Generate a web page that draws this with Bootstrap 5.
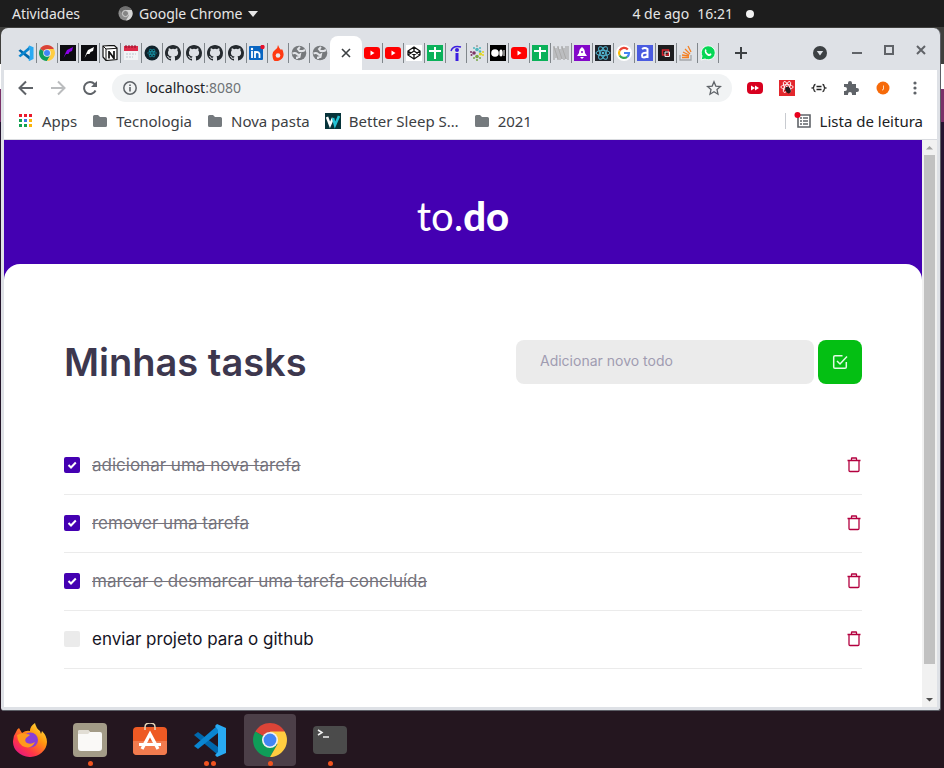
<!DOCTYPE html>
<html lang="pt-BR">
<head>
<meta charset="utf-8">
<meta name="viewport" content="width=device-width, initial-scale=1">
<title>to.do</title>
<link href="https://cdn.jsdelivr.net/npm/bootstrap@5.3.0/dist/css/bootstrap.min.css" rel="stylesheet">
<style>
  body {
    font: 15px/20px "Noto Sans", "Open Sans", sans-serif;
    color: #3c4043;
    background: linear-gradient(#3f3f3d 64px, #fff 64px, #fff 89px, #7a3068 89px, #7a3068 122px, #241430 122px, #241621 700px);
  }
  button { border: 0; padding: 0; background: none; color: inherit; }
  a { color: inherit; text-decoration: none; }
  svg { display: block; flex: none; }

  .desk-bar { height: 27px; background: #1d1d1d; color: #e6e6e6; font-size: 14px; padding: 0 12px; }
  .desk-app { margin-left: 38px; gap: 6px; }
  .desk-clock { margin-left: auto; margin-right: 178px; gap: 8px; }
  .clock-dot { width: 8px; height: 8px; border-radius: 50%; background: #f2f2f2; margin-left: 5px; }

  .win { margin: 1px 3px 0 1px; padding: 0 3px 3px; background: #dee1e6; border-radius: 7px 7px 3px 3px; border-right: 1px solid #5d5f66; border-bottom: 1px solid #5d5f66; }
  .tab-strip { height: 42px; padding-left: 12px; }
  .tab-item { padding: 2px; border-right: 1px solid #80868b; height: 20px; width: 21px; }
  .tab-item.no-rule { border-color: transparent; }
  .tab-open { width: 32px; height: 34px; border-radius: 8px 8px 0 0; background: #fff; align-self: flex-end; margin-left: -1px; }
  .win-tools { gap: 17px; padding-right: 8px; }

  .tool-row { height: 35px; background: #fff; padding: 0 14px; gap: 16px; color: #5f6368; }
  .omni { height: 28px; margin: 0 -1px 0 -2px; border-radius: 14px; background: #f1f3f4; padding: 0 10px; gap: 8px; font-size: 14px; }
  .url-box { color: #202124; outline: 0; }
  .url-box span { color: #6f7377; }
  .ext-row { gap: 16px; }

  .mark-row { height: 35px; background: #fff; border-bottom: 1px solid #d9dbdf; padding: 0 14px 3px; }
  .mark-row a { gap: 8px; margin-right: 15px; }
  .read-list { border-left: 1px solid #c8cbd0; padding-left: 8px; height: 16px; }
  .mark-row .read-list { margin-right: 0; color: #202124; }

  .page { background: #4400b2; }
  .brand-head { height: 124px; padding-top: 53px; color: #fff; font: 400 40px/46px Lato, sans-serif; }
  .brand-head b { font-weight: 900; }
  .sheet { background: #fff; border-radius: 16px 16px 0 0; padding: 76px 60px 30px; font-family: Inter, sans-serif; }
  .sheet h1 { font-size: 38px; line-height: 44px; font-weight: 600; color: #3d374e; margin: 0; }
  .new-task { width: 298px; height: 44px; border: 0; border-radius: 8px; background: #ebebeb; padding: 0 24px 3px; font-size: 14px; color: #3d3d4d; outline: 0; }
  .new-task::placeholder { color: #a09cb1; opacity: 1; }
  .add-btn { width: 44px; height: 44px; border-radius: 8px; background: #04bf13; color: #fff; }
  .task-list { margin-top: 53px; }
  .task-row { height: 58px; padding-bottom: 2px; border-bottom: 1px solid #ebebeb; font-size: 17px; color: #15141f; }
  .task-row label { gap: 12px; }
  .task-row input { appearance: none; width: 16px; height: 16px; margin: 0; border-radius: 2px; background: #ebebeb; }
  .task-row input:checked { background: #4400b2 url("data:image/svg+xml,%3Csvg xmlns='http://www.w3.org/2000/svg' viewBox='0 0 16 16'%3E%3Cpath d='M4.5 8l2.5 2.5 4.8-5' fill='none' stroke='white' stroke-width='2'/%3E%3C/svg%3E"); }
  .task-row input:checked + span { text-decoration: line-through; color: #75737c; }
  .bin { color: #b3003f; }

  .scroller { width: 15px; background: #f1f1f1; }
  .scroller svg { width: 15px; height: 15px; }
  .thumb { width: 11px; flex: 510; background: #c1c1c1; }
  .thumb-rest { flex: 28; }

  .dock { background: #24161f; padding: 2px 4px; margin-top: 1px; gap: 8px; height: 56px; }
  .dock a { width: 52px; height: 52px; border-radius: 4px; }
  .dock a.current { background: #4c3f48; }
  .run-dots { position: absolute; bottom: 0; left: 0; right: 0; gap: 2px; }
  .run-dots i { width: 5px; height: 5px; border-radius: 50%; background: #f0531f; }
</style>
<script src="https://cdn.jsdelivr.net/npm/bootstrap@5.3.0/dist/js/bootstrap.bundle.min.js"></script>
</head>
<body class="d-flex flex-column min-vh-100">

<svg width="0" height="0" class="position-absolute" aria-hidden="true">
  <symbol id="vscode" viewBox="0 0 34 34"><path d="M1 12l4-3 20 15v8z" fill="#0068ad"/><path d="M1 23l4 3 20-16V2z" fill="#0a86d1"/><path d="M24 1l9 4v25l-9 4-2-2 3-3V7l-3-4z" fill="#29aaf2"/></symbol>
  <symbol id="chrome" viewBox="0 0 34 34"><path d="M17 17L2.300 8.500A17 17 0 0 1 31.700 8.500z" fill="#db4437"/><path d="M2.300 8.500A17 17 0 0 0 17 34l7.400-12.800L17 17z" fill="#0f9d58"/><path d="M31.700 8.500A17 17 0 0 1 17 34l7.400-12.800L17 8.500z" fill="#ffcd40"/><circle cx="17" cy="17" r="8" fill="#f1f1f1"/><circle cx="17" cy="17" r="6.400" fill="#4285f4"/></symbol>
  <symbol id="chrome-gray" viewBox="0 0 34 34"><circle cx="17" cy="17" r="16" fill="#8c8c8c"/><path d="M17 9h14a16 16 0 0 1-13 24l7-12z" fill="#d5d5d5"/><path d="M3 9a16 16 0 0 1 28 0H17a8 8 0 0 0-8 7z" fill="#6f6f6f"/><circle cx="17" cy="17" r="7" fill="#858585" stroke="#ddd" stroke-width="2"/></symbol>
  <symbol id="github" viewBox="0 0 16 16"><path fill="#24292e" d="M8 0C3.580 0 0 3.580 0 8c0 3.540 2.290 6.530 5.470 7.590.4.070.55-.17.55-.38 0-.19-.01-.82-.01-1.490-2.010.37-2.530-.49-2.690-.94-.09-.23-.48-.94-.82-1.130-.28-.15-.68-.52-.01-.53.63-.01 1.080.58 1.230.82.72 1.210 1.870.87 2.330.66.07-.52.28-.87.51-1.070-1.780-.2-3.640-.89-3.640-3.950 0-.87.31-1.590.82-2.150-.08-.2-.36-1.020.08-2.120 0 0 .67-.21 2.200.82a7.600 7.600 0 0 1 4 0c1.530-1.040 2.200-.82 2.200-.82.44 1.100.16 1.920.08 2.120.51.56.82 1.270.82 2.150 0 3.070-1.870 3.750-3.650 3.950.29.25.54.73.54 1.480 0 1.070-.01 1.930-.01 2.200 0 .21.15.46.55.38A8 8 0 0 0 16 8c0-4.420-3.580-8-8-8z"/></symbol>
  <symbol id="globe" viewBox="0 0 16 16"><circle cx="8" cy="8" r="7.300" fill="#76797c"/><path d="M1.500 8.500q3-1 4.500.5t3 .5l-.5 2.500-2.500.5v1.500M9 2l-2 2 1.500 2H12l2-1" fill="none" stroke="#e2e4e8" stroke-width="2"/></symbol>
  <symbol id="youtube" viewBox="0 0 16 16"><rect y="2" width="16" height="12" rx="3" fill="red"/><path d="M6.500 5.500v5L10.500 8z" fill="#fff"/></symbol>
  <symbol id="sheets" viewBox="0 0 16 16"><path fill="#0bb15a" d="M0 0h16v16H0z"/><path d="M2 6h12M8 2v12" stroke="#fff" stroke-width="2"/></symbol>
  <symbol id="atom" viewBox="0 0 16 16"><g fill="none" stroke="currentColor" stroke-width="1"><ellipse cx="8" cy="8" rx="7" ry="2.700"/><ellipse cx="8" cy="8" rx="7" ry="2.700" transform="rotate(60 8 8)"/><ellipse cx="8" cy="8" rx="7" ry="2.700" transform="rotate(120 8 8)"/></g><circle cx="8" cy="8" r="1.300" fill="currentColor"/></symbol>
  <symbol id="wing" viewBox="0 0 16 16"><path fill="#0d0d11" d="M0 0h16v16H0z"/><path d="M3.500 13l2-5 1.500-3 6-3-1 4-2.500 1-1 2H6z" fill="currentColor"/></symbol>
  <symbol id="folder" viewBox="0 0 16 16"><path d="M1 3.500Q1 2 2.500 2H6l2 2h5.500Q15 4 15 5.500v7q0 1.500-1.500 1.500h-11Q1 14 1 12.500z" fill="#757a7e"/></symbol>
  <symbol id="bin" viewBox="0 0 16 16"><path d="M1.500 3.500h13M3 4v9.500q0 1 1 1h8q1 0 1-1V4M5.500 3.500v-2q0-.5.500-.5h4q.5 0 .5.500v2" fill="none" stroke="currentColor" stroke-width="1.300"/></symbol>
</svg>

<header class="desk-bar d-flex align-items-center">
  <button type="button">Atividades</button>
  <button type="button" class="desk-app d-flex align-items-center"><svg width="15" height="15"><use href="#chrome-gray"/></svg>Google Chrome<svg width="10" height="6" viewBox="0 0 10 6"><path d="M0 0h10L5 6z" fill="#e6e6e6"/></svg></button>
  <button type="button" class="desk-clock d-flex align-items-center"><span>4 de ago</span><span>16:21</span><span class="clock-dot"></span></button>
</header>

<section class="win d-flex flex-column flex-grow-1">
  <nav class="tab-strip d-flex" aria-label="Abas">
    <div class="d-flex align-items-center pt-2">
      <a href="#" class="tab-item"><svg width="16" height="16"><use href="#vscode"/></svg></a>
      <a href="#" class="tab-item"><svg width="16" height="16"><use href="#chrome"/></svg></a>
      <a href="#" class="tab-item"><svg width="16" height="16" color="#8b00e8"><use href="#wing"/></svg></a>
      <a href="#" class="tab-item"><svg width="16" height="16" color="#fff"><use href="#wing"/></svg></a>
      <a href="#" class="tab-item"><svg width="16" height="16" viewBox="0 0 16 16"><path d="M1 1l11-.7L15 3v11.500L4 15.500 1 12z" fill="#fff" stroke="#111" stroke-width="1.200"/><path d="M1 1l3 3 11-.7M4 4v11" fill="none" stroke="#111"/><path d="M7 13.500V6m5 8V6M7 6.500l5 7" fill="none" stroke="#111" stroke-width="1.700"/></svg></a>
      <a href="#" class="tab-item"><svg width="16" height="16" viewBox="0 0 16 16"><path d="M1 1h14v14H1z" fill="#f2f3f5"/><path d="M1 1h14v5H1z" fill="#dd2a49"/><path d="M3 0v3m3-3v3m3-3v3m3-3v3" stroke="#8e0e2b"/><path d="M3 9h10M3 12h7" stroke="#bcc3cc" stroke-dasharray="2 1"/></svg></a>
      <a href="#" class="tab-item"><svg width="16" height="16" viewBox="0 0 16 16" color="#16a0b5"><circle cx="8" cy="8" r="7.500" fill="#10222b"/><g transform="translate(3 3) scale(.63)"><use href="#atom" width="16" height="16"/></g></svg></a>
      <a href="#" class="tab-item"><svg width="16" height="16"><use href="#github"/></svg></a>
      <a href="#" class="tab-item"><svg width="16" height="16"><use href="#github"/></svg></a>
      <a href="#" class="tab-item"><svg width="16" height="16"><use href="#github"/></svg></a>
      <a href="#" class="tab-item"><svg width="16" height="16"><use href="#github"/></svg></a>
      <a href="#" class="tab-item"><svg width="16" height="16" viewBox="0 0 16 16"><rect y="1" width="14" height="14" rx="1" fill="#0a66c2"/><path d="M3 6v7m3 0V6m0 3q0-2 2-2t2.500 2v4" fill="none" stroke="#fff" stroke-width="1.800"/><circle cx="3" cy="4" r="1.200" fill="#fff"/><circle cx="13.500" cy="2" r="2.200" fill="#e8102a"/></svg></a>
      <a href="#" class="tab-item"><svg width="16" height="16" viewBox="0 0 16 16"><path d="M8 0q1 3 3 5l1-1q2 3 1.500 6.500T8 16t-5.500-5.500Q2 7 5 5q3-2 3-5z" fill="#ff3a12"/><circle cx="8" cy="10.500" r="2.300" fill="#e8e9ec"/></svg></a>
      <a href="#" class="tab-item"><svg width="16" height="16"><use href="#globe"/></svg></a>
      <a href="#" class="tab-item no-rule"><svg width="16" height="16"><use href="#globe"/></svg></a>
    </div>
    <button type="button" class="tab-open d-flex align-items-center justify-content-center" aria-label="Fechar aba"><svg width="10" height="10" viewBox="0 0 10 10"><path d="M1 1l8 8M9 1L1 9" stroke="#3c4043" stroke-width="1.600"/></svg></button>
    <div class="d-flex align-items-center pt-2">
      <a href="#" class="tab-item"><svg width="16" height="16"><use href="#youtube"/></svg></a>
      <a href="#" class="tab-item"><svg width="16" height="16"><use href="#youtube"/></svg></a>
      <a href="#" class="tab-item"><svg width="16" height="16" viewBox="0 0 16 16"><path d="M0 0h16v16H0z" fill="#fff"/><path d="M8 2l6 4v4l-6 4-6-4V6zM8 2v4m0 4v4M2 6l6 4 6-4M2 10l6-4 6 4" fill="none" stroke="#111" stroke-width="1.300"/></svg></a>
      <a href="#" class="tab-item"><svg width="16" height="16"><use href="#sheets"/></svg></a>
      <a href="#" class="tab-item"><svg width="16" height="16" viewBox="0 0 16 16"><path d="M3 6Q5 0 13 2" fill="none" stroke="#3b1de0" stroke-width="1.500"/><circle cx="9" cy="5" r="2" fill="#3b1de0"/><path d="M9 8v8" stroke="#3b1de0" stroke-width="3"/></svg></a>
      <a href="#" class="tab-item"><svg width="16" height="16" viewBox="0 0 16 16"><g fill="#4cb6bd"><circle cx="8" cy="4.500" r="1.800"/><circle cx="5" cy="3" r="1"/><circle cx="11" cy="3" r="1"/><circle cx="11" cy="6.500" r="1.300"/></g><g fill="#7c3566"><circle cx="5" cy="8" r="1.800"/><circle cx="2" cy="7" r="1"/><circle cx="2.500" cy="10" r="1"/></g><g fill="#e3d51c"><circle cx="11.500" cy="9" r="1.600"/><circle cx="14" cy="7" r="1"/><circle cx="14" cy="10" r="1"/></g><g fill="#77a644"><circle cx="8" cy="11.500" r="1.800"/><circle cx="5" cy="13" r="1"/><circle cx="11" cy="13" r="1"/><circle cx="8" cy="15" r="1"/></g><circle cx="8" cy="1" r=".9" fill="#999"/></svg></a>
      <a href="#" class="tab-item"><svg width="16" height="16" viewBox="0 0 16 16"><path d="M0 0h16v16H0z"/><circle cx="5" cy="8" r="3.800" fill="#fff"/><ellipse cx="11" cy="8" rx="1.700" ry="3.500" fill="#fff"/><path d="M14 5v6" stroke="#fff"/></svg></a>
      <a href="#" class="tab-item"><svg width="16" height="16"><use href="#youtube"/></svg></a>
      <a href="#" class="tab-item"><svg width="16" height="16"><use href="#sheets"/></svg></a>
      <a href="#" class="tab-item"><svg width="16" height="16" viewBox="0 0 16 16"><path d="M1 1v14M3 3v10M5 1v14M7 4v11M9 1v13M11 3v12M13 1v13M15 1v14" fill="none" stroke="#999" stroke-width="1"/><path d="M1 2l4 12M5 2l4 12M9 2l4 12" stroke="#aaa"/></svg></a>
      <a href="#" class="tab-item"><svg width="16" height="16" viewBox="0 0 16 16"><path d="M0 0h16v16H0z" fill="#8308c9"/><path d="M8 2q3 2 3 6l2 3H3l2-3q0-4 3-6zM6 12h4l-2 2z" fill="#fff"/><circle cx="8" cy="7" r="1" fill="#8308c9"/></svg></a>
      <a href="#" class="tab-item"><svg width="16" height="16" viewBox="0 0 16 16" color="#53b9d4"><path d="M0 0h16v16H0z" fill="#20232a"/><use href="#atom" width="16" height="16"/></svg></a>
      <a href="#" class="tab-item"><svg width="16" height="16" viewBox="0 0 16 16"><circle cx="8" cy="8" r="8" fill="#fff"/><g fill="none" stroke-width="2.200"><path d="M11.800 4.500A5 5 0 0 0 3.700 5.500" stroke="#ea4335"/><path d="M3.700 5.500a5 5 0 0 0 0 5" stroke="#fbbc05"/><path d="M3.700 10.500a5 5 0 0 0 7.500 1.300" stroke="#34a853"/><path d="M11.200 11.800A5 5 0 0 0 13 8H8" stroke="#4285f4"/></g></svg></a>
      <a href="#" class="tab-item"><svg width="16" height="16" viewBox="0 0 16 16"><path d="M0 0h16v16H0z" fill="#4a5be0"/><path d="M5 4q3-2 5.500 0v9M10.500 8Q5 7 5 10.500T10.500 11" fill="none" stroke="#fff" stroke-width="2"/></svg></a>
      <a href="#" class="tab-item"><svg width="16" height="16" viewBox="0 0 16 16"><path d="M0 0h16v16H0z" fill="#1d1d1f"/><path d="M4.500 5h6v5h-6z" fill="none" stroke="#d5232d" stroke-width="1.500"/><path d="M7 7h4.500v4.500H7z" fill="none" stroke="#eee"/></svg></a>
      <a href="#" class="tab-item"><svg width="16" height="16" viewBox="0 0 16 16" fill="none"><path d="M1 10v5h11v-5" stroke="#a5a7aa" stroke-width="1.300"/><path d="M3 12.500h7M3 10l7 1M4 7l6 3M6 4l5 5M9 1l3 6" stroke="#f48024" stroke-width="1.300"/></svg></a>
      <a href="#" class="tab-item"><svg width="16" height="16" viewBox="0 0 16 16"><path d="M1 15l1-4a7 7 0 1 1 3 3z" fill="#06d755" stroke="#fff"/><path d="M5 4.500q1-1 1.500 1l-.3 1q1 2 3 2.700l1-.9q2 .7 1 1.700-1.500 2-4 .2-3.200-2.200-2.200-5.700z" fill="#fff"/></svg></a>
      <button type="button" class="ms-3" aria-label="Nova aba"><svg width="12" height="12" viewBox="0 0 12 12"><path d="M6 0v12M0 6h12" stroke="#3c4043" stroke-width="2"/></svg></button>
    </div>
    <div class="win-tools d-flex align-items-center ms-auto pt-1">
      <button type="button" class="me-1 pt-1" aria-label="Pesquisar abas"><svg width="16" height="16" viewBox="0 0 16 16"><circle cx="8" cy="8" r="7" fill="#3c4043"/><path d="M4.800 6h6.400L8 10.500z" fill="#dee1e6"/></svg></button>
      <button type="button" class="pt-1" aria-label="Minimizar"><svg width="16" height="12" viewBox="0 0 16 12"><path d="M3 6h10" stroke="#606368" stroke-width="2"/></svg></button>
      <button type="button" aria-label="Maximizar"><svg width="14" height="18" viewBox="0 0 14 18"><path d="M3 4h8v8H3z" fill="none" stroke="#606368" stroke-width="2"/></svg></button>
      <button type="button" aria-label="Fechar"><svg width="16" height="18" viewBox="0 0 16 18"><path d="M4 4l8 8M12 4l-8 8" stroke="#606368" stroke-width="2"/></svg></button>
    </div>
  </nav>

  <div class="tool-row d-flex align-items-center">
    <button type="button" aria-label="Voltar"><svg width="16" height="16" viewBox="0 0 16 16"><path d="M15 8H2M8 1.500L1.500 8 8 14.500" fill="none" stroke="currentColor" stroke-width="2"/></svg></button>
    <button type="button" aria-label="Avançar"><svg width="16" height="16" viewBox="0 0 16 16"><path d="M1 8h13M8 1.500L14.500 8 8 14.500" fill="none" stroke="#babcbe" stroke-width="2"/></svg></button>
    <button type="button" aria-label="Recarregar"><svg width="16" height="16" viewBox="0 0 16 16"><path d="M13.500 10.500A6 6 0 1 1 12.500 4l1 1" fill="none" stroke="currentColor" stroke-width="2"/><path d="M15 1v6H9z" fill="currentColor"/></svg></button>
    <div class="omni d-flex align-items-center flex-grow-1">
      <svg width="16" height="16" viewBox="0 0 16 16"><circle cx="8" cy="8" r="6.200" fill="none" stroke="currentColor" stroke-width="1.500"/><path d="M8 7v4.500M8 4.500V6" stroke="currentColor" stroke-width="1.600"/></svg>
      <div class="url-box flex-grow-1" role="textbox" contenteditable="true" aria-label="Endereço">localhost<span>:8080</span></div>
      <button type="button" aria-label="Favoritar"><svg width="16" height="16" viewBox="0 0 16 16"><path d="M8 1.800l1.800 4.300 4.700.4-3.500 3.100 1 4.600L8 11.800l-4 2.400 1-4.600L1.500 6.500l4.700-.4z" fill="none" stroke="currentColor" stroke-width="1.300"/></svg></button>
    </div>
    <div class="ext-row d-flex align-items-center">
      <button type="button" aria-label="Velocidade"><svg width="16" height="16" viewBox="0 0 16 16"><rect y="2" width="16" height="12" rx="4" fill="#d8001f"/><path d="M4 5.500v5L8 8zM8 5.500v5L12 8z" fill="#fff"/></svg></button>
      <button type="button" aria-label="React"><svg width="16" height="16" viewBox="0 0 16 16" color="#fff"><path d="M0 0h16v16H0z" fill="#e3272d"/><use href="#atom" width="16" height="14"/><ellipse cx="9" cy="10" rx="2.500" ry="3.500" fill="#22191b" transform="rotate(-30 9 10)"/></svg></button>
      <button type="button" aria-label="JSON"><svg width="16" height="16" viewBox="0 0 16 16"><path d="M4.500 4.500q-1.500 0-1.500 1.500T1.500 8q1.500.5 1.500 2t1.500 1.500M11.500 4.500q1.500 0 1.500 1.500t1.500 2q-1.500.5-1.500 2t-1.500 1.500M5.500 6.500h5M5.500 9.500h5" fill="none" stroke="#222" stroke-width="1.300"/></svg></button>
      <button type="button" aria-label="Extensões"><svg width="16" height="16" viewBox="0 0 16 16"><path d="M1 4h4V3a2 2 0 0 1 4 0v1h4v4h1a2 2 0 0 1 0 4h-1v3H9v-1a2 2 0 0 0-4 0v1H1v-4h1a2 2 0 0 0 0-4H1z" fill="#5f6368"/></svg></button>
      <button type="button" aria-label="Perfil"><svg width="16" height="16" viewBox="0 0 16 16"><circle cx="8" cy="8" r="6.500" fill="#f66a0a"/><path d="M8.500 5.500v3.500q0 1-1.500 1" fill="none" stroke="#ffd8b8"/></svg></button>
      <button type="button" aria-label="Menu"><svg width="16" height="16" viewBox="0 0 16 16" fill="#5f6368"><circle cx="8" cy="3" r="1.600"/><circle cx="8" cy="8" r="1.600"/><circle cx="8" cy="13" r="1.600"/></svg></button>
    </div>
  </div>

  <nav class="mark-row d-flex align-items-center" aria-label="Favoritos">
    <a href="#" class="d-flex align-items-center"><svg width="16" height="16" viewBox="0 0 16 16"><path d="M1 1h3v3H1zM6 1h3v3H6zM11 1h3v3h-3z" fill="#ea1b2d"/><path d="M1 6h3v3H1zM1 11h3v3H1zM6 11h3v3H6z" fill="#12a150"/><path d="M6 6h3v3H6z" fill="#3b78e7"/><path d="M11 6h3v3h-3zM11 11h3v3h-3z" fill="#fbb50a"/></svg>Apps</a>
    <a href="#" class="d-flex align-items-center"><svg width="16" height="16"><use href="#folder"/></svg>Tecnologia</a>
    <a href="#" class="d-flex align-items-center"><svg width="16" height="16"><use href="#folder"/></svg>Nova pasta</a>
    <a href="#" class="d-flex align-items-center"><svg width="16" height="16" viewBox="0 0 16 16"><path d="M0 0h16v16H0z" fill="#06333a"/><path d="M2 4l3 8 3-7" fill="none" stroke="#fff" stroke-width="2.500"/><path d="M8 5l2 7 4-9" fill="none" stroke="#22c3d6" stroke-width="2.500"/></svg>Better Sleep S…</a>
    <a href="#" class="d-flex align-items-center"><svg width="16" height="16"><use href="#folder"/></svg>2021</a>
    <a href="#" class="read-list d-flex align-items-center ms-auto"><svg width="18" height="18" viewBox="0 0 18 18"><path d="M4 3h12v12H4z" fill="none" stroke="#5f6368" stroke-width="1.600"/><path d="M6 6h2m1 0h5M6 9h2m1 0h5M6 12h2m1 0h5" stroke="#5f6368" stroke-width="1.500"/><circle cx="3.500" cy="3" r="3" fill="#e8001c"/></svg>Lista de leitura</a>
  </nav>

  <div class="d-flex flex-grow-1">
    <div class="page d-flex flex-column flex-grow-1">
      <header class="brand-head d-flex justify-content-center"><a href="#">to.<b>do</b></a></header>
      <main class="sheet flex-grow-1">
        <form class="d-flex align-items-center gap-1">
          <h1 class="me-auto">Minhas tasks</h1>
          <input class="new-task" type="text" placeholder="Adicionar novo todo" aria-label="Adicionar novo todo">
          <button type="submit" class="add-btn d-flex align-items-center justify-content-center" aria-label="Adicionar"><svg width="16" height="16" viewBox="0 0 16 16"><path d="M10.500 1.700H3q-1.300 0-1.300 1.300v10q0 1.300 1.300 1.300h10q1.300 0 1.300-1.300V8M5 7l3 3 7-7.500" fill="none" stroke="#e4fbe6" stroke-width="1.500"/></svg></button>
        </form>
        <ul class="task-list list-unstyled mb-0">
          <li class="task-row d-flex align-items-center justify-content-between">
            <label class="d-flex align-items-center"><input type="checkbox" checked><span>adicionar uma nova tarefa</span></label>
            <button type="button" class="bin" aria-label="Remover"><svg width="16" height="16"><use href="#bin"/></svg></button>
          </li>
          <li class="task-row d-flex align-items-center justify-content-between">
            <label class="d-flex align-items-center"><input type="checkbox" checked><span>remover uma tarefa</span></label>
            <button type="button" class="bin" aria-label="Remover"><svg width="16" height="16"><use href="#bin"/></svg></button>
          </li>
          <li class="task-row d-flex align-items-center justify-content-between">
            <label class="d-flex align-items-center"><input type="checkbox" checked><span>marcar e desmarcar uma tarefa concluída</span></label>
            <button type="button" class="bin" aria-label="Remover"><svg width="16" height="16"><use href="#bin"/></svg></button>
          </li>
          <li class="task-row d-flex align-items-center justify-content-between">
            <label class="d-flex align-items-center"><input type="checkbox"><span>enviar projeto para o github</span></label>
            <button type="button" class="bin" aria-label="Remover"><svg width="16" height="16"><use href="#bin"/></svg></button>
          </li>
        </ul>
      </main>
    </div>
    <div class="scroller d-flex flex-column align-items-center" aria-hidden="true">
      <svg viewBox="0 0 15 15"><path d="M4 9.500h7L7.500 6z" fill="#a3a3a3"/></svg>
      <div class="thumb"></div><div class="thumb-rest"></div>
      <svg viewBox="0 0 15 15"><path d="M4 6h7L7.500 9.500z" fill="#505050"/></svg>
    </div>
  </div>
</section>

<nav class="dock d-flex" aria-label="Aplicativos">
  <a href="#" class="position-relative d-flex align-items-center justify-content-center"><svg width="34" height="34" viewBox="0 0 34 34"><defs><linearGradient id="fox" x1="1" y1="0" x2=".2" y2="1"><stop offset="0" stop-color="#fff44f"/><stop offset=".4" stop-color="#ff980e"/><stop offset=".75" stop-color="#ff3647"/><stop offset="1" stop-color="#e31587"/></linearGradient></defs><path d="M6 5l3 5q4-3 8-2Q17 3 22 0q1 5 5 8l1 3 1-3q5 5 5 11A17 15.500 0 0 1 0 18Q0 13 3 9q1-3 3-4z" fill="url(#fox)"/><circle cx="17.500" cy="17" r="7.500" fill="#8a3fd6"/><path d="M4 12q5-3 9-1 3 0 4 1l-4 3q-2 3 1 5 4 2 8-1-3 7-10 5Q5 22 4 12z" fill="#ff9a1c"/></svg></a>
  <a href="#" class="position-relative d-flex align-items-center justify-content-center"><svg width="34" height="34" viewBox="0 0 34 34"><rect width="34" height="34" rx="4" fill="#a39b87"/><path d="M5 9q0-2 2-2h8l2 2h10q2 0 2 2v14q0 3-3 3H8q-3 0-3-3z" fill="#faf9f7"/><path d="M5 11V9q0-2 2-2h8l2 2-2 2z" fill="#e2ded5"/></svg><span class="run-dots d-flex justify-content-center"><i></i></span></a>
  <a href="#" class="position-relative d-flex align-items-center justify-content-center"><svg width="34" height="34" viewBox="0 0 34 34"><rect y="4" width="34" height="28" rx="4" fill="#ee5a24"/><path d="M0 18h34v10q0 4-4 4H4q-4 0-4-4z" fill="#f27b4e"/><path d="M12 7V4q0-4 5-4t5 4v3" fill="none" stroke="#e5d5b8" stroke-width="1.500"/><path d="M9 26l8-15 8 15M6 21.500h22" fill="none" stroke="#fff" stroke-width="3.200"/></svg></a>
  <a href="#" class="position-relative d-flex align-items-center justify-content-center"><svg width="34" height="34"><use href="#vscode"/></svg><span class="run-dots d-flex justify-content-center"><i></i><i></i></span></a>
  <a href="#" class="current position-relative d-flex align-items-center justify-content-center"><svg width="34" height="34"><use href="#chrome"/></svg><span class="run-dots d-flex justify-content-center"><i></i></span></a>
  <a href="#" class="position-relative d-flex align-items-center justify-content-center"><svg width="34" height="34" viewBox="0 0 34 34"><rect y="3" width="34" height="28" rx="4" fill="#4b4b4b"/><path d="M5 7l4 2.500L5 12M10 14h6" fill="none" stroke="#f2f2f2" stroke-width="1.500"/></svg><span class="run-dots d-flex justify-content-center"><i></i></span></a>
</nav>
</body>
</html>
